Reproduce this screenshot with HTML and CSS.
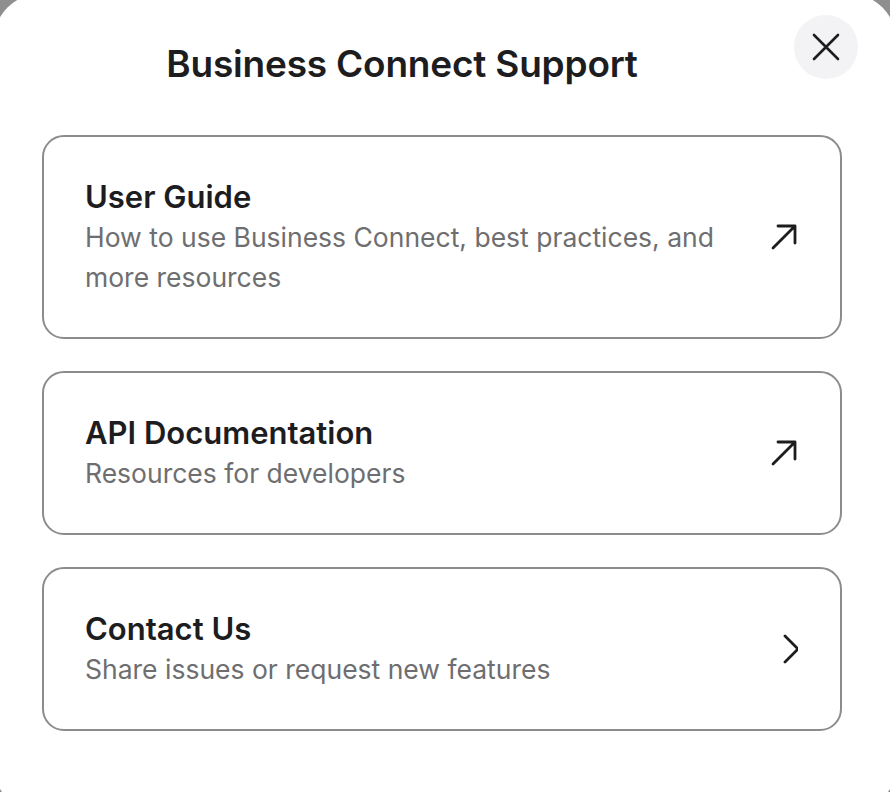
FILE: index.html
```html
<!DOCTYPE html>
<html lang="en">
<head>
<meta charset="utf-8">
<title>Business Connect Support</title>
<link rel="stylesheet" href="styles.css">
</head>
<body>
<div class="modal">
  <div class="header">
    <h1 class="title">Business Connect Support</h1>
    <button class="close" aria-label="Close">
      <svg width="28" height="28" viewBox="0 0 28 28" fill="none" stroke="#1d1d1f" stroke-width="2.6" stroke-linecap="round"><path d="M2 2 L26 26 M26 2 L2 26"/></svg>
    </button>
  </div>
  <div class="cards">
    <a class="card" href="#">
      <div class="text">
        <div class="card-title">User Guide</div>
        <div class="card-desc">How to use Business Connect, best practices, and more resources</div>
      </div>
      <span class="icon">
        <svg width="28" height="28" viewBox="0 0 28 28" fill="none" stroke="#1d1d1f" stroke-width="2.8" stroke-linecap="round" stroke-linejoin="round"><path d="M3 25 L25 3 M8 3 H25 V20"/></svg>
      </span>
    </a>
    <a class="card" href="#">
      <div class="text">
        <div class="card-title">API Documentation</div>
        <div class="card-desc">Resources for developers</div>
      </div>
      <span class="icon">
        <svg width="28" height="28" viewBox="0 0 28 28" fill="none" stroke="#1d1d1f" stroke-width="2.8" stroke-linecap="round" stroke-linejoin="round"><path d="M3 25 L25 3 M8 3 H25 V20"/></svg>
      </span>
    </a>
    <a class="card" href="#">
      <div class="text">
        <div class="card-title">Contact Us</div>
        <div class="card-desc">Share issues or request new features</div>
      </div>
      <span class="icon">
        <svg width="28" height="30" viewBox="0 0 28 30" fill="none" stroke="#1d1d1f" stroke-width="2.8" stroke-linecap="round" stroke-linejoin="round"><path d="M15 2 L28 15 L15 28"/></svg>
      </span>
    </a>
  </div>
</div>
</body>
</html>
```
FILE: styles.css
```css
html, body {
  margin: 0;
  padding: 0;
  height: 100%;
  overflow: hidden;
}
body {
  background: #8f8f8f;
  font-family: Inter, "Noto Sans", "Liberation Sans", sans-serif;
  color: #1d1d1f;
}
.modal {
  background: #ffffff;
  margin: -6px -6px 0 -6px;
  height: 818px;
  border-radius: 46px;
  padding: 21px 54px 0 48px;
  box-sizing: border-box;
}
.header {
  display: flex;
  align-items: flex-start;
  gap: 32px;
  margin-right: -16px;
}
.title {
  flex: 1;
  margin: 0;
  padding-top: 27px;
  text-align: center;
  font-size: 37px;
  line-height: 44px;
  font-weight: 600;
  letter-spacing: -0.2px;
  color: #1d1d1f;
}
.close {
  width: 64px;
  height: 64px;
  border-radius: 50%;
  border: none;
  background: #f3f3f5;
  display: flex;
  align-items: center;
  justify-content: center;
  padding: 0;
  flex: none;
}
.cards {
  margin-top: 49px;
  display: flex;
  flex-direction: column;
  gap: 32px;
}
.card {
  display: flex;
  align-items: center;
  gap: 24px;
  border: 2px solid #8c8c8c;
  border-radius: 22px;
  padding: 40px 42px 40px 41px;
  text-decoration: none;
  color: inherit;
}
.text {
  flex: 1;
}
.card-title {
  font-size: 31px;
  line-height: 40px;
  font-weight: 600;
  color: #1d1d1f;
}
.card-desc {
  font-size: 26.5px;
  line-height: 40px;
  color: #6e6e70;
}
.icon {
  width: 32px;
  display: flex;
  justify-content: flex-end;
  flex: none;
}
```
